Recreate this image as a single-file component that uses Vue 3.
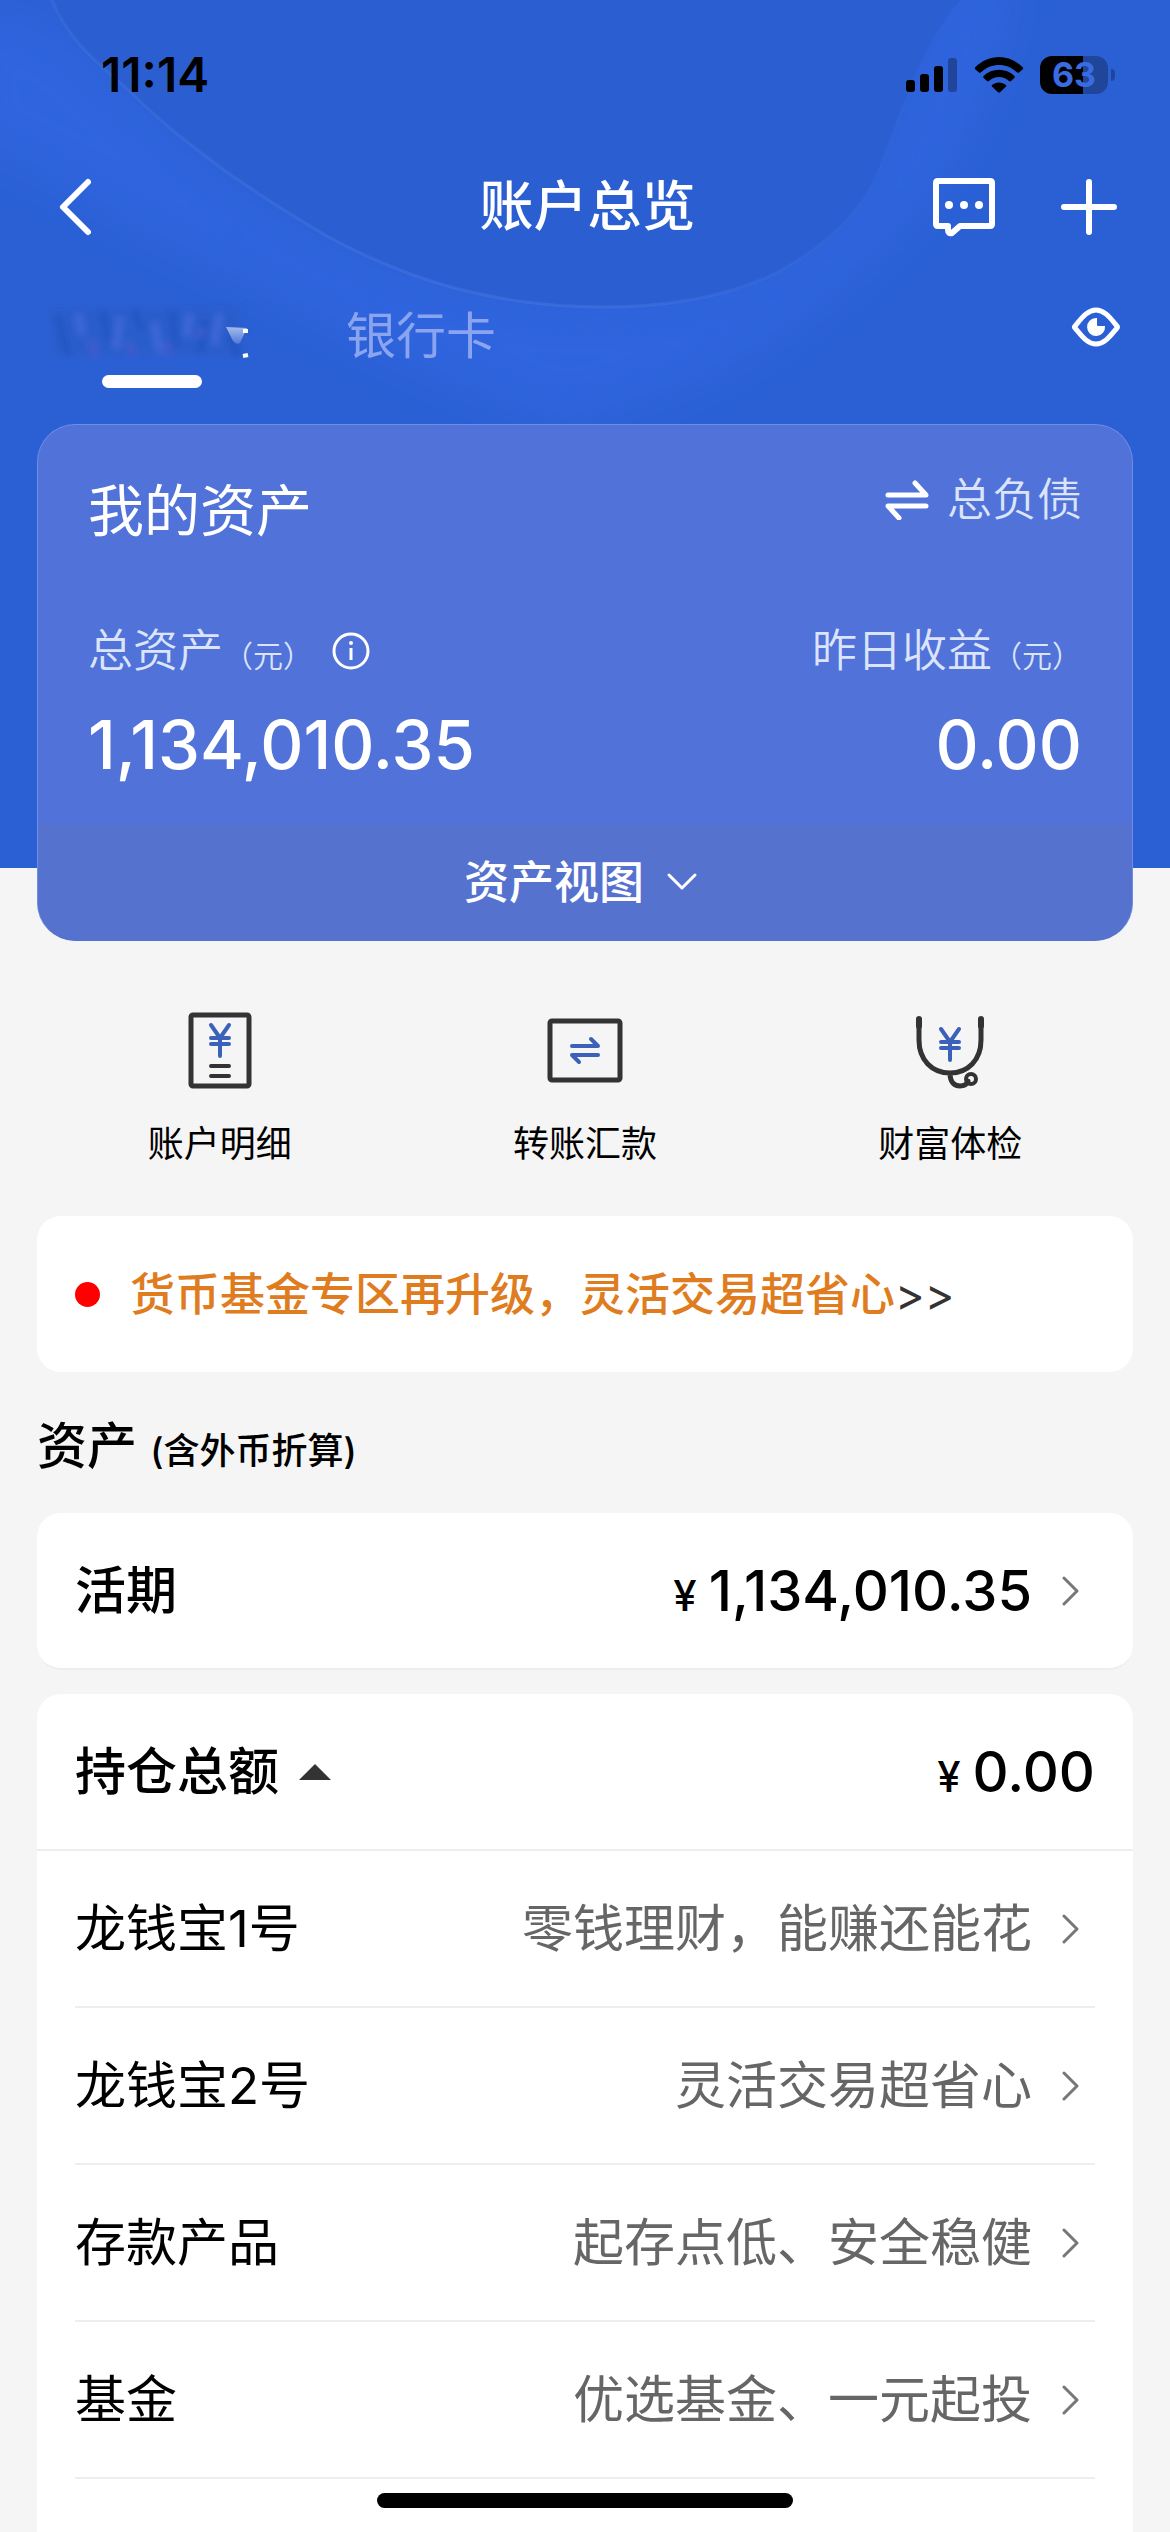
<script setup>
import { ref } from 'vue'

const cashBalance = '1,134,010.35'
const holdingsOpen = ref(true)

const products = [
  { name: '龙钱宝1号', note: '零钱理财，能赚还能花' },
  { name: '龙钱宝2号', note: '灵活交易超省心' },
  { name: '存款产品', note: '起存点低、安全稳健' },
  { name: '基金', note: '优选基金、一元起投' },
]
</script>

<template>
  <div class="page">
    <header class="hero">
      <svg class="hero-art" viewBox="0 0 1170 869" preserveAspectRatio="xMidYMin slice" aria-hidden="true">
        <defs>
          <filter id="soft" x="-20%" y="-20%" width="140%" height="140%">
            <feGaussianBlur stdDeviation="22" />
          </filter>
          <linearGradient id="rim" x1="0" y1="0" x2="1" y2="0">
            <stop offset="0" stop-color="#5b86ea" stop-opacity="0.2" />
            <stop offset="0.6" stop-color="#5b86ea" stop-opacity="0.3" />
            <stop offset="1" stop-color="#5b86ea" stop-opacity="0" />
          </linearGradient>
        </defs>
        <path
          filter="url(#soft)"
          fill="#3066e2"
          opacity="0.75"
          d="M-30 20C40 0 80 60 140 110C260 230 420 307 604 307C740 307 840 260 890 150C915 80 940 20 960 -20L1010 -20C985 120 930 220 820 300C740 370 660 400 560 420C440 380 330 320 230 270C130 230 60 170 -30 140Z"
        />
        <path
          fill="#2b5ed0"
          d="M52 0C72 50 115 75 142 103C170 130 195 148 224 170C250 188 275 205 299 219C340 246 375 260 410 274C465 294 530 307 604 307C680 307 735 293 776 273C815 252 850 225 872 185C895 140 910 60 960 0Z"
        />
        <path
          fill="none"
          stroke="url(#rim)"
          stroke-width="3"
          d="M52 0C72 50 115 75 142 103C170 130 195 148 224 170C250 188 275 205 299 219C340 246 375 260 410 274C465 294 530 307 604 307C680 307 735 293 776 273C815 252 850 225 872 185C895 140 910 60 960 0"
        />
      </svg>

      <div class="status">
        <time class="clock">11:14</time>
        <div class="status-icons">
          <svg width="52" height="36" viewBox="0 0 52 36" aria-hidden="true">
            <rect x="0" y="23" width="9" height="12" rx="3" />
            <rect x="14" y="17" width="9" height="18" rx="3" />
            <rect x="28" y="9" width="9" height="26" rx="3" />
            <rect x="42" y="1" width="9" height="34" rx="3" opacity="0.3" />
          </svg>
          <svg width="50" height="36" viewBox="0 0 50 36" aria-hidden="true">
            <path d="M1 10.500C15 -3.500 35 -3.500 49 10.500Q49.500 11.500 48.500 12.500L45 15.500Q44 16.200 43 15.300C33 5.500 17 5.500 7 15.300Q6 16.200 5 15.500L1.500 12.500Q0.500 11.500 1 10.500Z" />
            <path d="M9.500 19C18 10.500 32 10.500 40.500 19Q41.200 20 40.300 21L37 24Q36 24.800 35 24C29.500 18.500 20.500 18.500 15 24Q14 24.800 13 24L9.700 21Q8.800 20 9.500 19Z" />
            <path d="M18 28C22 24.600 28 24.600 32 28Q32.700 28.700 32 29.500L26 35.200Q25 36 24 35.200L18 29.500Q17.300 28.700 18 28Z" />
          </svg>
          <div class="battery"><span>63</span></div>
        </div>
      </div>

      <nav class="bar">
        <button class="icon-btn" aria-label="返回">
          <svg width="36" height="60" viewBox="0 0 36 60" aria-hidden="true">
            <path d="M31 5L6 30L31 55" fill="none" stroke="#fff" stroke-width="6" stroke-linecap="round" stroke-linejoin="round" />
          </svg>
        </button>
        <h1>账户总览</h1>
        <div class="bar-actions">
          <button class="icon-btn" aria-label="消息">
            <svg width="64" height="60" viewBox="0 0 64 60" aria-hidden="true">
              <path d="M6 4H58Q60 4 60 6V47Q60 49 58 49H28L20 56Q16 57 16 53V49H6Q4 49 4 47V6Q4 4 6 4Z" fill="none" stroke="#fff" stroke-width="6" stroke-linejoin="round" />
              <circle cx="17" cy="28" r="4" fill="#fff" /><circle cx="32" cy="28" r="4" fill="#fff" /><circle cx="47" cy="28" r="4" fill="#fff" />
            </svg>
          </button>
          <button class="icon-btn" aria-label="更多">
            <svg width="58" height="58" viewBox="0 0 58 58" aria-hidden="true">
              <path d="M29 4V54M4 29H54" stroke="#fff" stroke-width="6" stroke-linecap="round" />
            </svg>
          </button>
        </div>
      </nav>

      <div class="tabs">
        <button class="tab active" aria-label="账户">
          <svg width="216" height="64" viewBox="0 0 216 64" aria-hidden="true">
            <defs>
              <filter id="smear" x="-10%" y="-20%" width="120%" height="140%"><feGaussianBlur stdDeviation="3" /></filter>
              <linearGradient id="fade" x1="0" y1="0" x2="0" y2="1">
                <stop offset="0" stop-color="#c3d2f2" />
                <stop offset="1" stop-color="#5b82dd" />
              </linearGradient>
            </defs>
            <g filter="url(#smear)" fill="none" stroke-width="8">
              <path fill="#2c5dcc" d="M4 6H196L204 56H10Z" />
              <path stroke="#2457c4" d="M14 14L24 54M58 10L64 40M90 8L98 30M128 10L132 46M162 18L156 52M186 34L194 56" />
              <path stroke="#3c68d6" d="M34 12L38 34M76 16L72 48M110 22L116 52M146 12L142 36M176 12L170 44" />
              <path stroke="#3d5ccc" d="M46 38L52 56M84 40L90 54M124 40L122 56M152 36L160 28" />
            </g>
            <path fill="url(#fade)" opacity="0.8" d="M182 26L203 27L196 42Q192 44 189 40Z" />
            <path stroke="#fff" stroke-width="4" d="M199 30H204M199 55L204 54" />
          </svg>
        </button>
        <button class="tab">银行卡</button>
        <button class="icon-btn eye" aria-label="显示金额">
          <svg width="50" height="42" viewBox="0 0 50 42" aria-hidden="true">
            <path d="M4 20C10 13 16 4 25 4S40 13 46 20Q47 21 46 22C40 29 34 38 25 38S10 29 4 22Q3 21 4 20Z" fill="none" stroke="#fff" stroke-width="5" />
            <path d="M25 12A9 9 0 1 0 34 20H27Q26 20 26 19V12Z" fill="#fff" />
          </svg>
        </button>
      </div>

      <section class="assets">
        <div class="assets-head">
          <h2>我的资产</h2>
          <button class="switch">
            <svg width="44" height="40" viewBox="0 0 44 40" aria-hidden="true">
              <path d="M3 15H41L30 3M41 26H3L14 38" fill="none" stroke="#fff" stroke-width="5" stroke-linecap="round" stroke-linejoin="round" />
            </svg>
            总负债
          </button>
        </div>
        <div class="figures">
          <div>
            <p class="label">
              <span>总资产<small>（元）</small></span>
              <button class="icon-btn" aria-label="说明">
                <svg width="40" height="40" viewBox="0 0 40 40" aria-hidden="true">
                  <circle cx="20" cy="20" r="17" fill="none" stroke="#fff" stroke-width="3" />
                  <path d="M20 17V29" stroke="#fff" stroke-width="3" /><circle cx="20" cy="12" r="2" fill="#fff" />
                </svg>
              </button>
            </p>
            <p class="value">{{ cashBalance }}</p>
          </div>
          <div class="right">
            <p class="label"><span>昨日收益<small>（元）</small></span></p>
            <p class="value">0.00</p>
          </div>
        </div>
        <button class="view">
          资产视图
          <svg width="32" height="20" viewBox="0 0 32 20" aria-hidden="true">
            <path d="M3 3L16 16L29 3" fill="none" stroke="#fff" stroke-width="3" stroke-linecap="round" stroke-linejoin="round" />
          </svg>
        </button>
      </section>
    </header>

    <main>
      <div class="shortcuts">
        <button>
          <svg width="80" height="80" viewBox="0 0 80 80" fill="none" stroke-width="5" stroke-linecap="round" stroke-linejoin="round" aria-hidden="true">
            <rect x="11" y="5" width="58" height="71" rx="2" stroke="#333" />
            <path d="M31 15L40 28L49 15M31 28H49M31 34H49M40 28V46" stroke="#3b61b8" stroke-width="4" />
            <path d="M31 56H49M31 66H49" stroke="#333" stroke-width="4" />
          </svg>
          账户明细
        </button>
        <button>
          <svg width="80" height="80" viewBox="0 0 80 80" fill="none" stroke-width="5" stroke-linecap="round" stroke-linejoin="round" aria-hidden="true">
            <rect x="5" y="11" width="70" height="59" rx="2" stroke="#333" />
            <path d="M27 36H53L46 29M53 45H27L34 52" stroke="#3b61b8" stroke-width="4" />
          </svg>
          转账汇款
        </button>
        <button>
          <svg width="80" height="80" viewBox="0 0 80 80" fill="none" stroke-width="5" stroke-linecap="round" stroke-linejoin="round" aria-hidden="true">
            <path d="M9 9V16M71 9V16" stroke="#333" stroke-width="6" />
            <path d="M9 12V30C9 50 22 63 40 63S71 50 71 30V12M40 63C40 72 44 76 50 76C55 76 57 74 58 71" stroke="#333" />
            <circle cx="61" cy="69" r="5" stroke="#333" stroke-width="4" />
            <path d="M31 19L40 32L49 19M31 32H49M31 38H49M40 32V50" stroke="#3b61b8" stroke-width="4" />
          </svg>
          财富体检
        </button>
      </div>

      <a class="notice" href="#"><i class="dot"></i><span><strong>货币基金专区再升级，灵活交易超省心</strong>&gt;&gt;</span></a>

      <h2 class="section-title">资产 <small>(含外币折算)</small></h2>

      <a class="card row strong" href="#">
        <span>活期</span>
        <span class="money"><small>¥</small>{{ cashBalance }}</span>
        <svg class="go" width="18" height="30" viewBox="0 0 18 30" aria-hidden="true"><path d="M2 2L15 15L2 28" /></svg>
      </a>

      <section class="card holdings">
        <button class="row strong" :aria-expanded="holdingsOpen" @click="holdingsOpen = !holdingsOpen">
          <span class="toggle">
            持仓总额
            <svg width="32" height="16" viewBox="0 0 32 16" aria-hidden="true"><path d="M16 0L32 16H0Z" fill="#333" /></svg>
          </span>
          <span class="money"><small>¥</small>0.00</span>
        </button>
        <ul v-if="holdingsOpen">
          <li v-for="p in products" :key="p.name">
            <a class="row" href="#">
              <span>{{ p.name }}</span>
              <span class="note">{{ p.note }}</span>
              <svg class="go" width="18" height="30" viewBox="0 0 18 30" aria-hidden="true"><path d="M2 2L15 15L2 28" /></svg>
            </a>
          </li>
        </ul>
      </section>
    </main>
    <div class="home-indicator"></div>
  </div>
</template>

<style>
body {
  margin: 0;
  background: #f5f5f5;
}
</style>

<style scoped>
.page {
  display: flex;
  flex-direction: column;
  min-height: 100vh;
  background: #f5f5f5;
  color: #000;
  font-family: Inter, "Noto Sans CJK SC", sans-serif;
  line-height: 1.4;
}
h1, h2, p, ul { margin: 0; padding: 0; font-weight: 400; }
ul { list-style: none; }
a { color: inherit; text-decoration: none; }
small { line-height: 1; }
button {
  margin: 0;
  padding: 0;
  border: 0;
  background: none;
  color: inherit;
  font: inherit;
}
svg { display: block; flex: none; }

.hero {
  position: relative;
  padding: 0 37px;
  background: #2b60d5;
  color: #fff;
}
.hero-art {
  position: absolute;
  inset: 0;
  width: 100%;
  height: 100%;
}
.status, .bar, .tabs, .assets { position: relative; }

.status {
  display: flex;
  align-items: center;
  justify-content: space-between;
  height: 150px;
  padding: 0 25px 0 64px;
  color: #000;
}
.clock { font-size: 48px; font-weight: 600; }
.status-icons { display: flex; align-items: center; gap: 16px; }
.battery {
  position: relative;
  width: 68px;
  height: 38px;
  border-radius: 12px;
  background: linear-gradient(90deg, #000 63%, #1f4699 63%);
  color: #3a6be0;
  font-size: 34px;
  font-weight: 700;
  line-height: 38px;
  text-align: center;
}
.battery::after {
  content: "";
  position: absolute;
  top: 13px;
  right: -7px;
  width: 4px;
  height: 12px;
  border-radius: 0 6px 6px 0;
  background: #1f4699;
}

.bar {
  display: grid;
  grid-template-columns: 1fr auto 1fr;
  align-items: center;
  height: 114px;
  padding: 0 15px 0 20px;
}
.bar h1 { font-size: 54px; font-weight: 500; line-height: 72px; }
.bar-actions { display: flex; align-items: center; justify-content: flex-end; gap: 64px; }

.tabs {
  display: flex;
  align-items: flex-start;
  height: 160px;
}
.tab {
  height: 144px;
  color: #8ba4ef;
  font-size: 50px;
}
.tab.active {
  display: flex;
  flex-direction: column;
  justify-content: space-between;
  align-items: center;
  width: 230px;
  height: 87px;
  margin: 37px 79px 0 0;
}
.tab.active::after {
  content: "";
  width: 100px;
  height: 13px;
  border-radius: 7px;
  background: #fff;
}
.eye { margin: 42px 12px 0 auto; }

.assets {
  margin-bottom: -73px;
  overflow: hidden;
  border: 1px solid #6f8de4;
  border-bottom-color: #5672cf;
  border-radius: 38px;
  background: #5172d8;
}
.assets-head, .figures {
  display: flex;
  align-items: flex-start;
  justify-content: space-between;
  padding: 50px 50px 0;
}
.assets-head h2 { font-size: 56px; line-height: 72px; }
.switch {
  display: flex;
  align-items: center;
  gap: 18px;
  color: #dbe4fb;
  font-size: 45px;
  font-weight: 350;
  line-height: 50px;
}
.figures { padding-top: 77px; }
.right { text-align: right; }
.label {
  display: flex;
  align-items: center;
  gap: 18px;
  height: 54px;
  color: #dbe4fb;
  font-size: 45px;
  font-weight: 350;
  line-height: 54px;
}
.right .label { justify-content: flex-end; }
.label small { font-size: 30px; }
.value {
  margin: 25px 0 37px;
  font-size: 67px;
  font-weight: 500;
  line-height: 84px;
}
.view {
  display: flex;
  align-items: center;
  justify-content: center;
  gap: 22px;
  width: 100%;
  height: 116px;
  padding-right: 8px;
  background: #5672cf;
  font-size: 45px;
  font-weight: 500;
}

main {
  display: flex;
  flex: 1;
  flex-direction: column;
  padding: 142px 37px 0;
}
.shortcuts {
  display: grid;
  grid-template-columns: repeat(3, 1fr);
  margin-bottom: 46px;
}
.shortcuts button {
  display: flex;
  flex-direction: column;
  align-items: center;
  gap: 28px;
  font-size: 36px;
  line-height: 52px;
}
.card, .notice { border-radius: 24px; background: #fff; }
.notice {
  display: flex;
  align-items: center;
  gap: 30px;
  height: 156px;
  padding: 0 38px;
  color: #333;
  font-size: 45px;
}
.notice strong { color: #df7c20; font-weight: 500; }
.dot { width: 25px; height: 25px; border-radius: 50%; background: #f00; }

.section-title {
  margin: 38px 0 31px;
  font-size: 50px;
  font-weight: 500;
  line-height: 72px;
}
.section-title small { font-size: 36px; }

.row {
  display: flex;
  align-items: center;
  box-sizing: border-box;
  width: 100%;
  height: 157px;
  border-bottom: 2px solid #eee;
  font-size: 51px;
  line-height: 72px;
}
.row.strong { padding: 0 38px; }
.row.strong > span:first-child { font-weight: 500; }
.card.row { margin-bottom: 24px; }
.toggle { display: flex; align-items: center; gap: 20px; }
.money {
  margin-left: auto;
  font-size: 56px;
  font-weight: 500;
}
.money small { margin-right: 12px; font-size: 42px; }
.note { margin-left: auto; color: #666; }
.go {
  margin: 0 15px 0 30px;
  fill: none;
  stroke: #777;
  stroke-width: 3;
  stroke-linecap: round;
  stroke-linejoin: round;
}
.holdings { flex: 1; border-radius: 24px 24px 0 0; }
.holdings li { padding: 0 38px; }
.home-indicator {
  position: fixed;
  bottom: 24px;
  left: 50%;
  width: 416px;
  height: 15px;
  margin-left: -208px;
  border-radius: 8px;
  background: #000;
}
</style>
